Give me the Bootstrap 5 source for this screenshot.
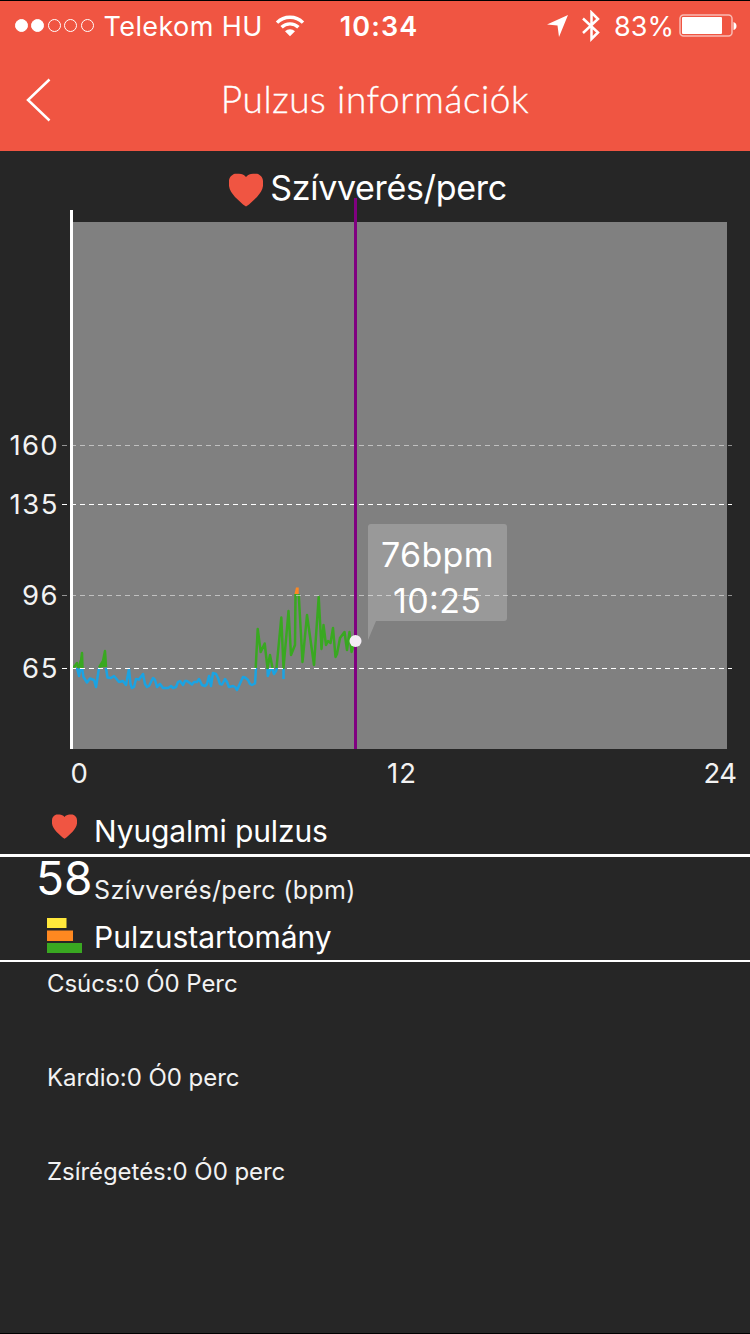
<!DOCTYPE html>
<html lang="hu">
<head>
<meta charset="utf-8">
<meta name="viewport" content="width=device-width, initial-scale=1">
<title>Pulzus információk</title>
<link href="https://cdn.jsdelivr.net/npm/bootstrap@5.3.0/dist/css/bootstrap.min.css" rel="stylesheet">
<style>
body{background:#262626;color:#fff;font-family:Inter,"Liberation Sans",sans-serif;line-height:1}
.screen{width:750px;height:1334px;border-top:1px solid #000;border-bottom:1px solid #000}
.app-header{background:#f05542;height:150px}
.status-bar{height:50px;font-size:27px;padding:0 13px 0 15px}
.signal{gap:3.4px;margin-top:-1px}
.signal i{width:13px;height:13px;border-radius:50%;border:1px solid #fff}
.signal i.on{background:#fff}
.carrier{letter-spacing:.4px;margin:0 12px 0 10px}
.clock{font-weight:600;letter-spacing:1.1px}
.battery{margin-left:5px}
.bluetooth{margin:0 14px 0 14px}
.app-title{font-family:Lato,sans-serif;font-weight:300;font-size:37px;letter-spacing:.6px;-webkit-text-stroke:.35px #fff;padding-bottom:4px}
.nav-row{height:98px}
.chart-title{height:59px;font-size:34px;padding:16px 15px 0 0;letter-spacing:-.3px}
.title-heart{margin:3px 6px 0 0}
.chart{overflow:visible;font-family:Inter,sans-serif}
.section-head{font-size:30px;padding-left:47px}
.icon-slot{width:47px}
.rest-head{height:54px;border-bottom:3px solid #fff;letter-spacing:-.1px}
.range-head{height:52px;border-bottom:2px solid #fff}
.rest-value{height:53px;padding-left:36px}
.rest-num{font-size:46px;margin-top:-2px;width:58px}
.unit{font-size:25px;letter-spacing:.35px;margin-top:21px;color:#f2f2f2}
.zones{padding-top:10px}
.zones li{font-size:24px;height:94px;padding-left:47px;letter-spacing:-.05px;color:#f2f2f2}
</style>
</head>
<body>
<main class="screen overflow-hidden">
<header class="app-header">
  <div class="status-bar d-flex align-items-center position-relative">
    <div class="signal d-flex"><i class="on"></i><i class="on"></i><i></i><i></i><i></i></div>
    <span class="carrier">Telekom HU</span>
    <svg width="30" height="22" viewBox="0 0 30 22" fill="none" stroke="#fff" stroke-width="3.4"><path d="M2 7.6a18.4 18.4 0 0 1 26 0M6.6 12.3a12 12 0 0 1 16.8 0"/><path d="M10 16.2a7.2 7.2 0 0 1 10 0l-5 5z" fill="#fff" stroke="none"/></svg>
    <span class="clock position-absolute start-50 translate-middle-x ms-1">10:34</span>
    <div class="ms-auto d-flex align-items-center">
      <svg width="21" height="22" viewBox="0 0 21 22"><path d="M21 0L12 22L10.500 10.500L0 9.500z" fill="#fff"/></svg>
      <svg class="bluetooth" width="18" height="32" viewBox="0 0 18 32" fill="none" stroke="#fff" stroke-width="2.5"><path d="M1 8.500L16 22.500L9.500 29V2.500L16 9L1 23"/></svg>
      <span class="pct">83%</span>
      <svg class="battery" width="58" height="24" viewBox="0 0 58 24"><rect x="1" y="1" width="52" height="21" rx="3.500" fill="none" stroke="#fff" stroke-opacity=".6" stroke-width="1.500"/><rect x="3" y="3" width="40" height="17" rx="1" fill="#fff"/><path d="M54.500 8q3 1 3 4t-3 4z" fill="#fff"/></svg>
    </div>
  </div>
  <nav class="nav-row d-flex align-items-center justify-content-center position-relative">
    <svg class="position-absolute start-0 ms-4" width="30" height="44" viewBox="0 0 30 44" fill="none" stroke="#fff" stroke-width="2.500"><path d="M25.500 1.500L4 22L25.500 42.500"/></svg>
    <span class="app-title">Pulzus információk</span>
  </nav>
</header>

<h1 class="chart-title d-flex align-items-center justify-content-center m-0 fw-normal">
  <svg class="title-heart" width="36" height="34" viewBox="0 0 36 34"><path id="heart" d="M18 4C20 2 22 .8 25 .8H29C32 1.500 35 4.500 35 8V13C34.500 17 32 20.500 29 24L21 31.500L18 33.500L15 31.500L7 24C4 20.500 1.500 17 1 13V8C1 4.500 4 1.500 7 .8H11C14 .8 16 2 18 4z" fill="#f05542"/></svg>
  <span class="bpm-title">Szívverés/perc</span>
</h1>

<svg class="chart d-block" width="750" height="593" viewBox="0 210 750 593">
  <rect x="73" y="222" width="654" height="527" fill="#808080"/>
  <g fill="none" stroke="#1ba3e2" stroke-width="2.500" stroke-linejoin="round">
    <path d="M77 668L79 676L80.500 668M82 668L83.500 677L87 682.500L90 678.500L94 680L96 687L99 668M106 668L107.500 677.500L111 678L114 676L119 682L123 681L126 685L129 669L130.500 684L132 688L134 687L136 679L139 679.500L143 674L145 684L147 687L149 686L153 678L155 680L157 687L160 684L163 688L168 688L171 686L173 688L176 687L178 682L180 681L183 685L185 681L187 681L192 684.500L194 682L197 682L199 679L202 685L205 686L207 684L209 676L211 686L213 673L216 674L218 678L220 684L222 684.500L225 679L227 682L229 687L233 686L235 687L237 690L243 677L245 677.500L248 680L250 684L252 685L255 683.500L256 668M267.500 668L267.800 676L270 670L272 668L274 674L276 671L277 668M283.500 668V679"/>
    <path stroke="#39a821" d="M73 667.500L75 666L77 663L78 667L80.500 666L82 653L82.500 668M99 667.500L103 661L105 651L106 667M255.700 668L257.700 629L260.700 652L264.700 643.500L267.500 668L270 655L272.500 668M276.500 668L281.300 617.500L283.500 668L288.500 611L291 655L295 645L295.500 594M298.700 594L302.500 662L307 615L314 665L318.700 597L321.500 649L323.500 625L326 645L328 641L330.500 643L333 628L335.500 657L337 654L340 638L344.500 632L347 650L349.500 632L351.500 652L355 642"/>
    <path d="M77.500 667L82 653.500V668zM100 667.500L104 660L106 652V667z" fill="#39a821" stroke="none"/>
    <path d="M294.500 594L296 587.500H298.700V594z" fill="#ff8820" stroke="none"/>
  </g>
  <g stroke="#fff" stroke-width="1" stroke-dasharray="5 4">
    <path d="M62 445.500H732M62 595.500H732" stroke-opacity=".5"/>
    <path d="M62 504.500H732M62 668.500H732"/>
  </g>
  <rect x="70" y="210" width="3" height="539" fill="#fff"/>
  <rect x="354" y="198" width="3" height="551" fill="#800080"/>
  <circle cx="355.500" cy="641" r="6" fill="#f3edf4"/>
  <path d="M371 524H504Q507 524 507 527V618Q507 621 504 621H376L368 640V527Q368 524 371 524z" fill="#fff" fill-opacity=".2"/>
  <g fill="#fff" font-size="34">
    <text x="381" y="566.500" textLength="112.500">76bpm</text>
    <text x="393" y="613" textLength="88">10:25</text>
  </g>
  <g fill="#f2f2f2" font-size="27.500">
    <text x="9.500" y="455" textLength="48">160</text>
    <text x="9.500" y="514" textLength="48">135</text>
    <text x="22" y="605" textLength="35.500">96</text>
    <text x="22" y="678" textLength="35.500">65</text>
    <text x="70.500" y="783">0</text>
    <text x="387" y="783" textLength="29">12</text>
    <text x="703.500" y="783" textLength="33.500">24</text>
  </g>
</svg>

<section>
  <div class="section-head rest-head d-flex align-items-center">
    <div class="icon-slot"><svg class="d-block ms-1 mb-1" width="27" height="25" viewBox="0 0 36 34"><use href="#heart"/></svg></div>
    <span class="mt-1">Nyugalmi pulzus</span>
  </div>
  <div class="rest-value d-flex align-items-start"><span class="rest-num">58</span><span class="unit">Szívverés/perc (bpm)</span></div>
</section>
<section>
  <div class="section-head range-head d-flex align-items-center">
    <div class="icon-slot"><svg class="d-block" width="35" height="35" viewBox="0 0 35 35"><path d="M0 0H19.500V10H0z" fill="#ffe83b"/><path d="M0 12.500H26V23H0z" fill="#ff8820"/><path d="M0 25H35V35H0z" fill="#39a821"/></svg></div>
    <span class="mt-1">Pulzustartomány</span>
  </div>
  <ul class="zones list-unstyled m-0">
    <li>Csúcs:0 Ó0 Perc</li>
    <li>Kardio:0 Ó0 perc</li>
    <li>Zsírégetés:0 Ó0 perc</li>
  </ul>
</section>
</main>
<script src="https://cdn.jsdelivr.net/npm/bootstrap@5.3.0/dist/js/bootstrap.bundle.min.js"></script>
</body>
</html>
